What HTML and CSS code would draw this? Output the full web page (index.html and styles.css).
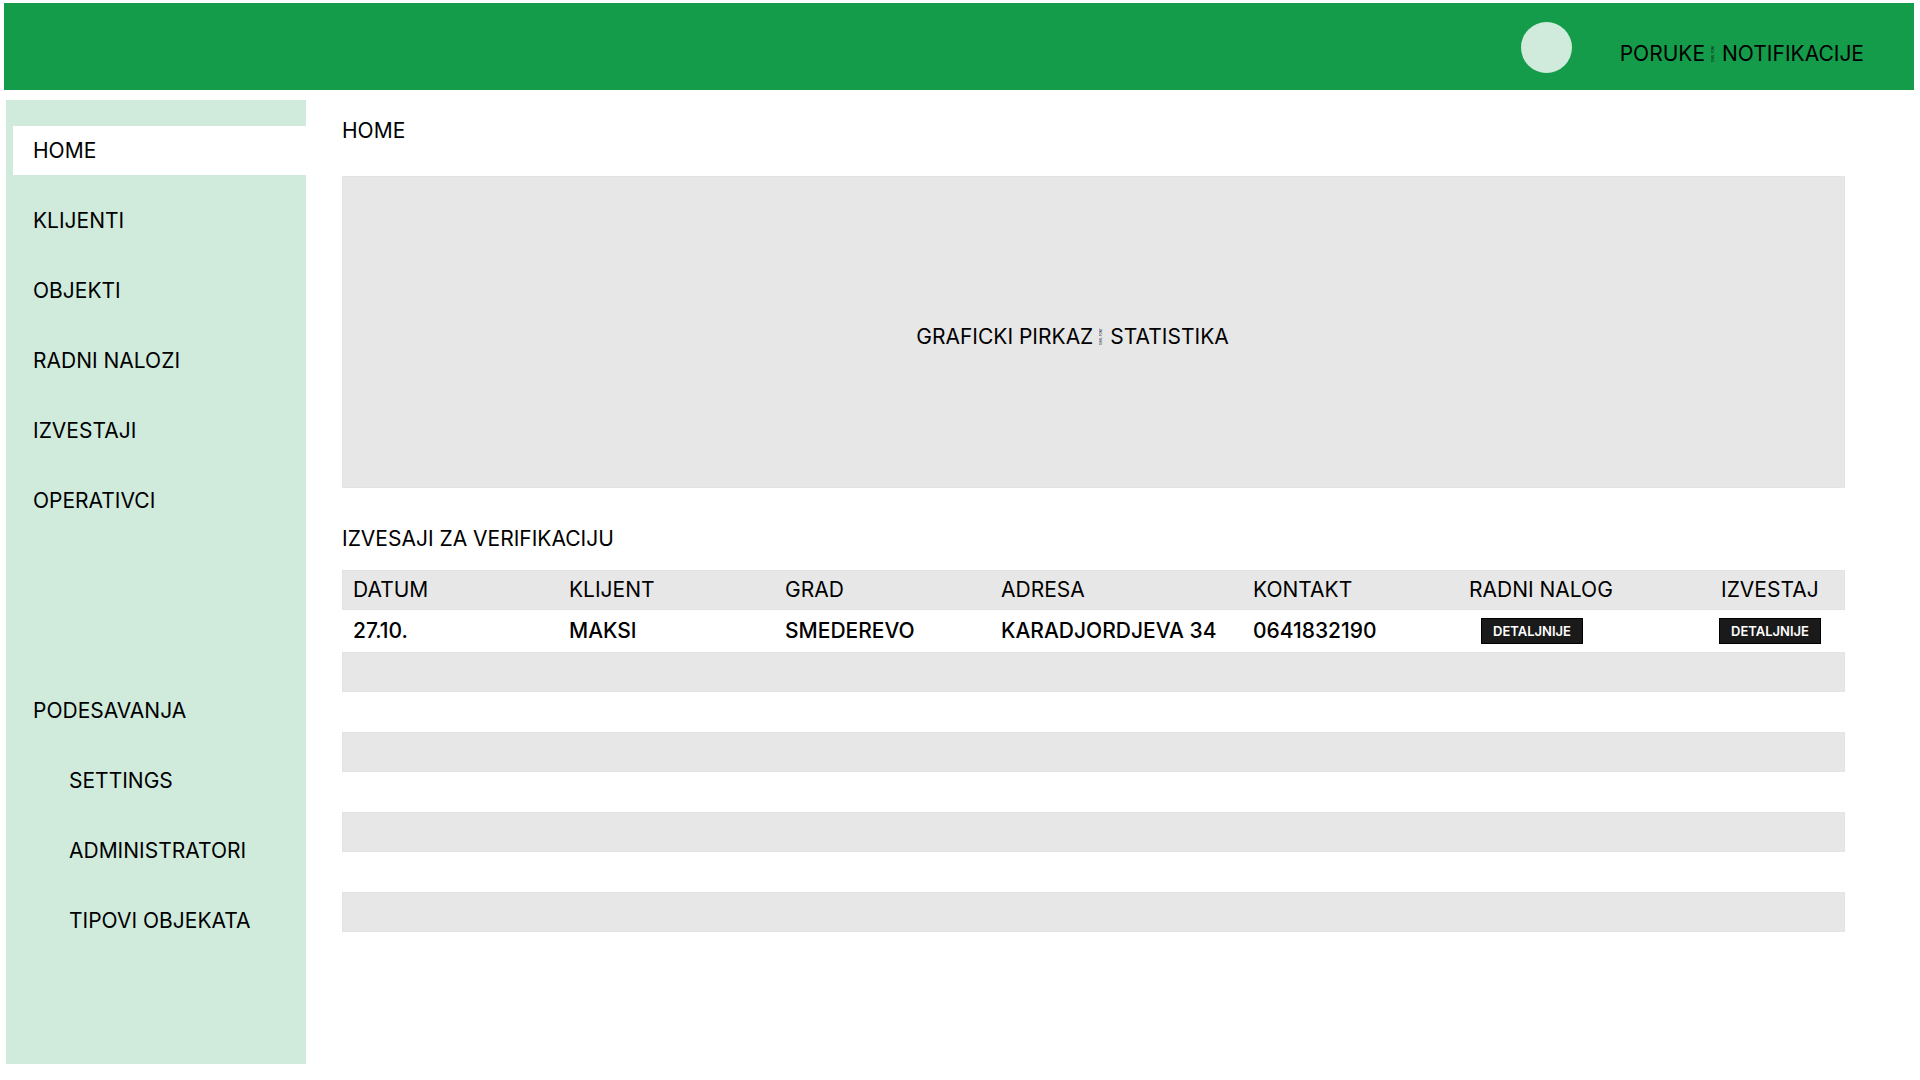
FILE: index.html
```html
<!DOCTYPE html>
<html lang="sr-Latn">
<head>
<meta charset="utf-8">
<meta name="viewport" content="width=device-width, initial-scale=1">
<title>Home</title>
<link rel="stylesheet" href="styles.css">
</head>
<body>
<header class="topbar">
  <span class="avatar"></span>
  <nav class="top-links">
    <a href="#">PORUKE</a>
    <span class="divider">TRIAL FONT</span>
    <a href="#">NOTIFIKACIJE</a>
  </nav>
</header>
<div class="layout">
  <nav class="sidebar">
    <a class="nav-item active" href="#">HOME</a>
    <a class="nav-item" href="#">KLIJENTI</a>
    <a class="nav-item" href="#">OBJEKTI</a>
    <a class="nav-item" href="#">RADNI NALOZI</a>
    <a class="nav-item" href="#">IZVESTAJI</a>
    <a class="nav-item" href="#">OPERATIVCI</a>
    <div class="nav-group">
      <a class="nav-item" href="#">PODESAVANJA</a>
      <a class="nav-item sub" href="#">SETTINGS</a>
      <a class="nav-item sub" href="#">ADMINISTRATORI</a>
      <a class="nav-item sub" href="#">TIPOVI OBJEKATA</a>
    </div>
  </nav>
  <main class="content">
    <h1 class="title">HOME</h1>
    <section class="chart">
      <span>GRAFICKI PIRKAZ</span>
      <span class="divider">TRIAL FONT</span>
      <span>STATISTIKA</span>
    </section>
    <h2 class="title">IZVESAJI ZA VERIFIKACIJU</h2>
    <table class="reports">
      <colgroup>
        <col class="col"><col class="col"><col class="col"><col class="col-wide"><col class="col"><col class="col-wide"><col class="col-last">
      </colgroup>
      <thead>
        <tr><th>DATUM</th><th>KLIJENT</th><th>GRAD</th><th>ADRESA</th><th>KONTAKT</th><th>RADNI NALOG</th><th>IZVESTAJ</th></tr>
      </thead>
      <tbody>
        <tr class="record">
          <td>27.10.</td><td>MAKSI</td><td>SMEDEREVO</td><td>KARADJORDJEVA 34</td><td>0641832190</td>
          <td class="action"><button class="details" type="button">DETALJNIJE</button></td>
          <td class="action last"><button class="details" type="button">DETALJNIJE</button></td>
        </tr>
        <tr class="stripe"><td colspan="7"></td></tr>
        <tr><td colspan="7"></td></tr>
        <tr class="stripe"><td colspan="7"></td></tr>
        <tr><td colspan="7"></td></tr>
        <tr class="stripe"><td colspan="7"></td></tr>
        <tr><td colspan="7"></td></tr>
        <tr class="stripe"><td colspan="7"></td></tr>
      </tbody>
    </table>
  </main>
</div>
</body>
</html>
```
FILE: styles.css
```css
* {
  box-sizing: border-box;
}

body {
  margin: 0;
  background: #fff;
  color: #000;
  font-family: Inter, "Liberation Sans", sans-serif;
  font-size: 21px;
  line-height: 24px;
}

a {
  color: inherit;
  text-decoration: none;
}

.topbar {
  display: flex;
  justify-content: flex-end;
  gap: 48px;
  height: 87px;
  margin: 3px 6px 0 4px;
  padding: 19px 50px 0 0;
  background: #149c4a;
}

.avatar {
  width: 51px;
  height: 51px;
  border-radius: 50%;
  background: #d0ebdc;
}

.top-links {
  display: flex;
  align-self: flex-start;
  align-items: center;
  gap: 7px;
  padding-top: 20px;
}

/* Tiny upright caption that separates two labels */
.divider {
  writing-mode: vertical-rl;
  transform: rotate(180deg);
  font-size: 3px;
  line-height: 3px;
  white-space: nowrap;
}

.layout {
  display: flex;
  margin-top: 10px;
}

.sidebar {
  display: flex;
  flex-direction: column;
  flex: 0 0 300px;
  gap: 21px;
  min-height: calc(100vh - 116px);
  margin: 0 0 16px 6px;
  padding: 26px 0 0 7px;
  background: #d0ebdc;
}

.nav-item {
  display: flex;
  align-items: center;
  height: 49px;
  padding-left: 20px;
}

.nav-item.active {
  background: #fff;
}

.nav-item.sub {
  padding-left: 56px;
}

.nav-group {
  display: flex;
  flex-direction: column;
  gap: 21px;
  margin-top: 140px;
}

.content {
  flex: 1;
  min-width: 0;
  padding: 19px 75px 0 36px;
}

.title {
  margin: 0;
  font-size: 21px;
  font-weight: 400;
}

.chart {
  display: flex;
  align-items: center;
  justify-content: center;
  gap: 7px;
  height: 312px;
  margin: 33px 0 39px;
  padding: 10px 42px 0 0;
  border: 1px solid #e3e3e3;
  background: #e7e7e7;
}

.reports {
  width: 100%;
  margin-top: 19px;
  border-collapse: collapse;
  table-layout: fixed;
}

.col {
  width: 216px;
}

.col-wide {
  width: 252px;
}

.col-last {
  width: 135px;
}

.reports th,
.reports td {
  height: 40px;
  padding: 0 0 0 11px;
  font-weight: 400;
  text-align: left;
  vertical-align: middle;
  white-space: nowrap;
}

.reports .record td {
  height: 42px;
  font-weight: 500;
}

.reports thead tr,
.reports .stripe {
  background: #e7e7e7;
  box-shadow: inset 0 0 0 1px #e3e3e3;
}

.reports .record .action {
  padding-left: 23px;
}

.reports .record .last {
  padding-left: 9px;
}

.details {
  display: block;
  width: 102px;
  height: 26px;
  padding: 0;
  border: 1px solid #000;
  background: #1a1a1a;
  color: #fff;
  font-family: inherit;
  font-size: 13px;
  font-weight: 600;
}
```
